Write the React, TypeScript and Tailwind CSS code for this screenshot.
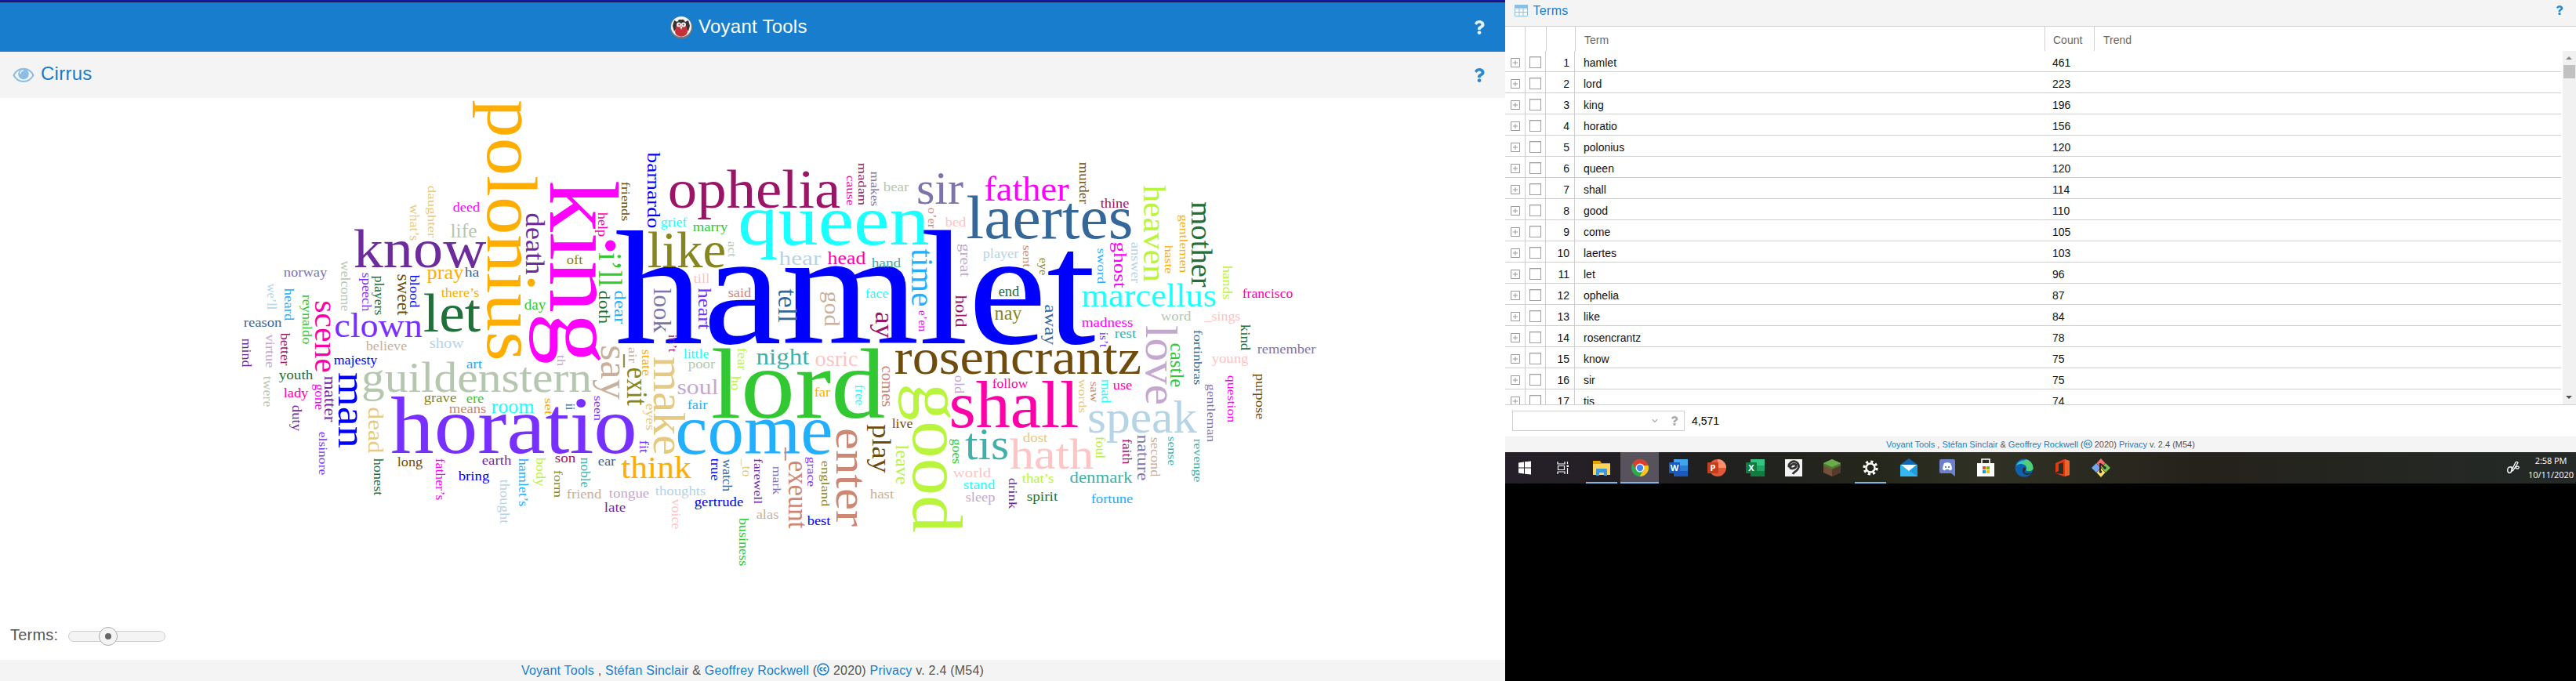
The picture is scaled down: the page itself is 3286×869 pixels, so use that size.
import React from "react";
import { FaQuestion, FaChevronDown } from "react-icons/fa";

const C: Record<string, string> = {
  or: "#ffae00", go: "#e6ca80", ma: "#ff00ff", sa: "#b6c7b0", pu: "#6e2b9e", la: "#7d74ab",
  vi: "#7730ff", dg: "#20703a", br: "#704c0c", bl: "#0000ff", st: "#34679a", lb: "#b5d4e6",
  sk: "#20b0ff", gr: "#32c832", pk: "#ff00a8", li: "#c5a8d0", wi: "#9c1468", ta: "#c8b09c",
  ol: "#86851f", sl: "#cc8874", cy: "#1affff", ro: "#ffc4c4", te: "#40b0a8", ye: "#b8f53c",
};

// word, left, right, baseline, size, colour
type Word = [string, number, number, number, number, string];

const across: Word[] = [
  ["deed", 578, 612, 270, 16, "ma"], ["life", 575, 608, 303, 25, "sa"], ["know", 452, 619, 341, 70, "pu"],
  ["norway", 362, 417, 353, 16, "la"], ["pray", 545, 591, 356, 26, "or"], ["ha", 593, 611, 353, 16, "st"],
  ["there’s", 563, 611, 379, 16, "or"], ["reason", 311, 359, 417, 17, "st"], ["clown", 427, 538, 429.5, 45, "vi"],
  ["let", 541, 612, 423, 70, "dg"], ["believe", 467, 519, 447, 16.5, "ta"], ["show", 548, 591, 444, 18, "lb"],
  ["majesty", 426, 481, 465, 16, "bl"], ["art", 595, 615, 470, 17, "sk"], ["youth", 356, 399, 484, 17, "dg"],
  ["guildenstern", 462, 754, 500, 55, "sa"], ["lady", 362, 393, 507, 17, "pk"], ["grave", 541, 582, 513, 17, "ol"],
  ["ere", 595, 617, 514, 17, "gr"], ["means", 573, 620, 527, 16, "sl"], ["room", 627, 681, 527, 25, "cy"],
  ["horatio", 500, 811, 577.5, 104, "vi"], ["long", 507, 539, 595, 17, "br"], ["bring", 585, 624, 613, 17, "bl"],
  ["earth", 615, 652, 593, 17, "pu"], ["day", 669, 696, 394.5, 18, "gr"], ["grief", 843, 876, 289, 17, "cy"],
  ["marry", 884, 928, 295, 17, "gr"], ["ophelia", 853, 1071, 265, 69, "wi"], ["oft", 723, 743, 337, 17, "ol"],
  ["hamlet", 788, 1394, 438, 208, "bl"], ["like", 827, 925, 341, 65, "ol"], ["queen", 943, 1184, 312, 91, "cy"],
  ["till", 885, 905, 361, 17, "ro"], ["said", 929, 958, 379, 17, "sl"], ["little", 872, 904, 457, 17, "cy"],
  ["poor", 878, 912, 470, 16, "sa"], ["soul", 864, 916, 503, 28, "li"], ["night", 965, 1032, 465, 29, "te"],
  ["lord", 909, 1127, 533, 128, "gr"], ["fair", 877, 902, 522, 17, "sk"], ["come", 863, 1061, 578.5, 90, "sk"],
  ["son", 708, 734, 590, 17, "wi"], ["ear", 763, 785, 594, 17, "st"], ["think", 793, 881, 610, 40, "or"],
  ["friend", 723, 767, 636, 17, "ta"], ["tongue", 777, 828, 635, 17, "li"], ["late", 771, 798, 653, 17, "pu"],
  ["thoughts", 836, 900, 632, 17, "lb"], ["gertrude", 886, 948, 646, 17, "bl"], ["alas", 965, 993, 662, 17, "ta"],
  ["bear", 1127, 1159, 244, 16, "sa"], ["sir", 1170, 1228, 260, 60, "la"], ["father", 1256, 1363, 256, 44, "ma"],
  ["laertes", 1234, 1444, 304, 78, "st"], ["bed", 1206, 1232, 289, 17, "ro"], ["hear", 994, 1047, 338, 26, "lb"],
  ["head", 1056, 1104, 337, 23, "pk"], ["hand", 1112, 1149, 341, 17, "te"], ["face", 1104, 1133, 380, 17, "cy"],
  ["player", 1254, 1299, 329, 17, "lb"], ["end", 1274, 1300, 378, 18, "dg"], ["nay", 1269, 1303, 408, 25, "ol"],
  ["osric", 1040, 1094, 467, 27, "ro"], ["rosencrantz", 1142, 1455, 477, 64, "br"], ["follow", 1266, 1311, 495, 17, "pk"],
  ["far", 1039, 1059, 506, 17, "or"], ["shall", 1212, 1375, 545, 84, "pk"], ["live", 1138, 1164, 546, 17, "br"],
  ["tis", 1232, 1286, 586, 58, "te"], ["hath", 1289, 1394, 598, 55, "ro"], ["dost", 1305, 1336, 564, 17, "go"],
  ["world", 1216, 1264, 609, 17, "ro"], ["stand", 1229, 1269, 624, 17, "cy"], ["sleep", 1232, 1269, 640, 17, "li"],
  ["that’s", 1304, 1344, 616, 17, "ye"], ["spirit", 1310, 1349, 639, 17, "dg"], ["best", 1030, 1059, 670, 17, "bl"],
  ["hast", 1110, 1140, 636, 17, "ta"], ["thine", 1404, 1440, 265, 17, "wi"], ["francisco", 1585, 1649, 380, 17, "pk"],
  ["marcellus", 1380, 1551, 391, 42, "cy"], ["word", 1481, 1519, 409, 17, "sa"], ["_sings", 1537, 1582, 409, 17, "ro"],
  ["madness", 1380, 1445, 417, 17, "ma"], ["rest", 1422, 1449, 431, 17, "te"], ["young", 1546, 1592, 463, 17, "ro"],
  ["remember", 1604, 1678, 451, 17, "la"], ["use", 1420, 1444, 497, 17, "pk"], ["speak", 1388, 1526, 551.5, 59, "lb"],
  ["denmark", 1365, 1444, 616, 21, "te"], ["fortune", 1392, 1445, 642, 17, "sk"],
];

// word, top, bottom, baseline x, size, colour
const down: Word[] = [
  ["polonius", 129, 459, 622, 92, "or"], ["daughter", 237, 303, 546, 15.5, "go"], ["what’s", 261, 307, 523, 16, "go"],
  ["welcome", 333, 397, 434.5, 16, "sa"], ["speech", 348, 397, 462, 16, "vi"], ["players", 352, 402, 477.5, 16, "dg"],
  ["sweet", 350, 402, 507, 23, "br"], ["blood", 351, 392, 523, 16, "bl"], ["we’ll", 362, 395, 341, 16, "lb"],
  ["heard", 368, 409, 363, 16, "sk"], ["reynaldo", 376, 439, 386, 16, "gr"], ["scene", 384, 475, 402, 39, "pk"],
  ["mind", 432, 468, 308.7, 16, "pu"], ["virtue", 427, 469, 338.5, 16, "li"], ["better", 425, 466, 357.5, 16, "wi"],
  ["matter", 480, 538, 414, 20, "pu"], ["gone", 490, 523, 401.5, 16, "ma"], ["man", 476, 571, 432, 50, "bl"],
  ["twere", 480, 519, 335.5, 16, "sa"], ["duty", 517, 550, 372.5, 16, "pu"], ["dead", 520, 578, 470, 27, "go"],
  ["elsinore", 551, 606, 406.5, 15.5, "vi"], ["honest", 585, 632, 477, 16, "dg"], ["father’s", 585, 638, 556, 16, "ma"],
  ["thought", 612, 668, 638, 16, "lb"], ["death", 272, 350, 670.5, 33, "pu"], ["king", 232, 463, 702, 125, "ma"],
  ["i’ll", 323, 365, 764, 43, "gr"], ["help", 271, 302, 762.5, 16, "pk"], ["friends", 232, 282, 793, 15.5, "br"],
  ["barnardo", 195, 291, 826, 24, "bl"], ["act", 308, 328, 929, 15.5, "sa"], ["heart", 368, 420, 891, 24, "vi"],
  ["look", 368, 424, 834, 31, "la"], ["doth", 371, 413, 763.5, 21, "dg"], ["dear", 371, 413, 783.5, 22, "sk"],
  ["tell", 369, 411, 993, 33, "st"], ["th", 453, 467, 710.5, 15.5, "li"], ["say", 441, 509, 767, 51, "ta"],
  ["in’t", 427, 449, 852.5, 15.5, "wi"], ["air", 443, 463, 801.5, 15.5, "ta"], ["_exit", 453, 517, 800, 37, "ol"],
  ["state", 446, 479, 819, 16, "or"], ["make", 456, 580, 834, 57, "go"], ["fear", 444, 472, 941, 16, "ye"],
  ["ho", 480, 498, 933, 16, "ye"], ["set", 508, 529, 694.5, 15.5, "or"], ["ii", 515, 523, 722, 16, "st"],
  ["seen", 505, 537, 758, 15.5, "vi"], ["eyes", 515, 549, 823.5, 16, "go"], ["fit", 562, 578, 816, 16, "vi"],
  ["hamlet’s", 585, 646, 662, 16, "sk"], ["body", 584, 620, 684, 16, "ye"], ["form", 600, 635, 707, 15.5, "ol"],
  ["noble", 584, 622, 741, 16, "te"], ["voice", 637, 675, 857, 16, "ro"], ["true", 585, 613, 907, 16, "bl"],
  ["watch", 586, 627, 922, 16, "st"], ["_to", 586, 608, 946.5, 16, "go"], ["farewell", 585, 643, 962, 15.5, "pu"],
  ["mark", 595, 631, 986, 15.5, "la"], ["business", 661, 722, 943, 16, "gr"], ["cause", 224, 262, 1080, 15.5, "pk"],
  ["madam", 208, 262, 1094.5, 15.5, "wi"], ["makes", 219, 263, 1110.5, 15.5, "la"], ["o’er", 265, 291, 1184, 15.5, "sl"],
  ["time", 318, 391, 1163, 39, "sk"], ["great", 311, 353, 1225, 19, "li"], ["god", 372, 416, 1052, 27, "ta"],
  ["ay", 398, 431, 1117, 33, "wi"], ["e’en", 396, 423, 1172, 15.5, "ma"], ["hold", 377, 417, 1219, 21, "wi"],
  ["sent", 313, 341, 1305, 15.5, "sl"], ["eye", 329, 351, 1326, 15.5, "ol"], ["away", 389, 440, 1332.5, 22, "st"],
  ["comes", 467, 519, 1125, 20, "sl"], ["old", 479, 502, 1218, 16, "li"], ["free", 491, 517, 1091, 16, "cy"],
  ["good", 491, 678, 1165, 91, "ye"], ["play", 542, 603, 1113, 33, "br"], ["enter", 547, 671, 1067, 58, "sl"],
  ["leave", 568, 618, 1143, 24, "ye"], ["goes", 560, 592, 1215, 16, "gr"], ["drink", 610, 649, 1287, 15.5, "pu"],
  ["_exeunt", 572, 674, 1005.5, 35, "sl"], ["grace", 583, 621, 1029.5, 15.5, "vi"], ["england", 588, 646, 1048, 15.5, "ol"],
  ["murder", 207, 260, 1377, 16, "br"], ["heaven", 237, 359, 1459, 41, "ye"], ["gentlemen", 274, 348, 1505, 15.5, "or"],
  ["mother", 258, 366, 1520, 37, "dg"], ["haste", 313, 349, 1486, 15.5, "or"], ["answer", 309, 361, 1443, 16, "lb"],
  ["ghost", 309, 367, 1421, 24, "ma"], ["sword", 317, 362, 1399.5, 15.5, "sk"], ["hands", 339, 382, 1560, 16, "ye"],
  ["is’t", 424, 443, 1402.5, 15.5, "vi"], ["love", 416, 516, 1462, 57, "li"], ["castle", 438, 494, 1493, 25, "gr"],
  ["fortinbras", 421, 491, 1522.5, 15.5, "st"], ["kind", 414, 447, 1583, 16, "dg"], ["question", 479, 539, 1566, 15.5, "ma"],
  ["purpose", 477, 535, 1602, 16, "br"], ["gentleman", 490, 564, 1539.5, 15.5, "la"], ["words", 484, 527, 1375.5, 15.5, "go"],
  ["saw", 487, 513, 1390.5, 15.5, "sl"], ["mad", 484, 514, 1405, 16, "cy"], ["foul", 557, 585, 1398, 16, "ye"],
  ["faith", 560, 592, 1432, 16, "wi"], ["nature", 555, 613, 1450.5, 20, "la"], ["second", 558, 608, 1467.5, 16, "ta"],
  ["sense", 557, 594, 1489.5, 15.5, "te"], ["revenge", 560, 615, 1522.5, 15.5, "te"],
];

const TOP = 125;
// Side bearing of the face, as a share of the font size.
const BEAR = 0.018;

function Cloud() {
  return (
    <svg width={1920} height={660} viewBox="0 0 1920 660" className="block font-['Liberation_Serif',serif]">
      {across.map(([w, a, b, y, s, c]) => (
        <text key={w} x={a - s * BEAR} y={y - TOP} fontSize={s} fill={C[c]} textLength={b - a + 2 * s * BEAR} lengthAdjust="spacingAndGlyphs">{w}</text>
      ))}
      {down.map(([w, a, b, x, s, c]) => (
        <text key={w} transform={`translate(${x} ${a - TOP - s * BEAR}) rotate(90)`} fontSize={s} fill={C[c]} textLength={b - a + 2 * s * BEAR} lengthAdjust="spacingAndGlyphs">{w}</text>
      ))}
    </svg>
  );
}

function Credits({ className }: { className: string }) {
  return (
    <div className={`flex items-center justify-center whitespace-pre bg-[#f4f4f4] text-[#555] ${className}`}>
      <span>
        <span className="text-[#157fcc]">Voyant Tools</span> , <span className="text-[#157fcc]">Stéfan Sinclair</span> &amp; <span className="text-[#157fcc]">Geoffrey Rockwell</span> (
        <svg viewBox="0 0 16 16" className="inline-block size-[1em] align-[-0.1em]">
          <circle cx="8" cy="8" r="7" fill="none" stroke="#157fcc" strokeWidth="1.6" />
          <path d="M7.300 6.300a2 2 0 1 0 0 3.400M12 6.300a2 2 0 1 0 0 3.400" fill="none" stroke="#157fcc" strokeWidth="1.500" />
        </svg>
        {" "}2020) <span className="text-[#157fcc]">Privacy</span> v. 2.4 (M54)
      </span>
    </div>
  );
}

function Logo() {
  return (
    <svg width="30" height="30" viewBox="0 0 30 30">
      <circle cx="15" cy="15" r="14.3" fill="#777" />
      <circle cx="15" cy="14" r="13" fill="#f4f4f4" />
      <path d="M6 6 10 8 12 5H18L20 8 24 6 26 13 24 20 19 14H11L6 20 4 13Z" fill="#333" />
      <path d="M8 14C10 10 20 10 22 14L23 21C21 28.500 9 28.500 7 21Z" fill="#c4303a" />
      <circle cx="12" cy="11.5" r="3" fill="#eee" /><circle cx="18" cy="11.5" r="3" fill="#eee" />
      <circle cx="12.3" cy="11.5" r="1" fill="#a22" /><circle cx="17.7" cy="11.5" r="1" fill="#a22" />
      <path d="M13.5 14h3L15 18Z" fill="#fff" />
    </svg>
  );
}

const rows: [string, number][] = [
  ["hamlet", 461], ["lord", 223], ["king", 196], ["horatio", 156], ["polonius", 120], ["queen", 120],
  ["shall", 114], ["good", 110], ["come", 105], ["laertes", 103], ["let", 96], ["ophelia", 87],
  ["like", 84], ["rosencrantz", 78], ["know", 75], ["sir", 75], ["tis", 74],
];

function TermsTable() {
  return (
    <div className="text-[14px] leading-none">
      <div className="flex h-8 border-t border-[#cfcfcf] text-[#666]">
        <div className="w-[26px] border-r border-[#cfcfcf]" />
        <div className="w-[27px] border-r border-[#cfcfcf]" />
        <div className="w-[37px] border-r border-[#cfcfcf]" />
        <div className="flex w-[599px] items-center border-r border-[#cfcfcf] pl-[11px] pt-0.5">Term</div>
        <div className="flex w-[63px] items-center border-r border-[#cfcfcf] pl-[10px] pt-0.5">Count</div>
        <div className="flex items-center pl-[11px] pt-0.5">Trend</div>
      </div>
      <div className="flex h-[452px] overflow-hidden border-b border-[#cfcfcf]">
        <div className="w-[1347px] text-[#111]">
          {rows.map(([term, count], i) => (
            <div key={term} className="flex h-[27px] items-stretch border-b border-[#cfcfcf]">
              <div className="flex w-[26px] items-center border-r border-[#cfcfcf] pl-[7px] pt-[3px]">
                <svg width="12" height="12"><path d="M.5.5h11v11H.5ZM3 6h6M6 3v6" fill="none" stroke="#999" /></svg>
              </div>
              <div className="flex w-[26px] items-center border-r border-[#cfcfcf] pl-[5px] pt-0.5">
                <div className="size-[15px] border border-[#a0a0a0] bg-white shadow-[inset_0_1px_1px_#ddd]" />
              </div>
              <div className="flex w-[37px] items-center justify-end border-r border-[#cfcfcf] pr-1.5 pt-1">{i + 1}</div>
              <div className="flex w-[598px] items-center pl-[11px] pt-1">{term}</div>
              <div className="flex items-center pl-[11px] pt-1">{count}</div>
            </div>
          ))}
        </div>
        <div className="ml-auto flex w-[17px] flex-col items-center bg-[#f1f1f1] py-1.5">
          <svg width="9" height="6"><path d="M0 5h8L4 1Z" fill="#888" /></svg>
          <div className="mt-[6px] h-[17px] w-[15px] bg-[#c1c1c1]" />
          <svg className="mt-auto" width="9" height="6"><path d="M0 1h8L4 5Z" fill="#505050" /></svg>
        </div>
      </div>
    </div>
  );
}

function OfficeTile({ letter, back, mid, front, round }: { letter: string; back: string; mid: string; front: string; round?: boolean }) {
  return (
    <svg width="24" height="24" viewBox="0 0 24 24">
      {round ? (
        <>
          <circle cx="13" cy="12" r="11" fill={mid} />
          <path d="M13 1a11 11 0 0 1 11 11H13Z" fill={back} />
        </>
      ) : (
        <>
          <rect x="6" y="1" width="18" height="22" rx="1" fill={mid} />
          <rect x="6" y="1" width="18" height="8" fill={back} />
          <rect x="6" y="16" width="18" height="7" fill={front} />
        </>
      )}
      <rect x="0" y="5" width="14" height="14" rx="1" fill={front} />
      <text x="7" y="16" textAnchor="middle" fontSize="11" fontWeight="700" fill="#fff" className="font-['Open_Sans',sans-serif]">{letter}</text>
    </svg>
  );
}

const I = ({ children }: { children: React.ReactNode }) => <svg width="26" height="26" viewBox="0 0 26 26">{children}</svg>;

const apps: { name: string; open?: boolean; active?: boolean; icon: React.ReactNode }[] = [
  { name: "start", icon: <I><path d="M5 6.500 12 5.500V12.500H5ZM13 5.300 21 4.500V12.500H13ZM5 13.500H12V20.500L5 19.500ZM13 13.500H21V21.500L13 20.700Z" fill="#fff" /></I> },
  { name: "tasks", icon: <I><path d="M6 5v3h9V5M6 21v-3h9v3M6.500 10.500h8v5h-8ZM18.500 5v3M18.500 13v8" fill="none" stroke="#fff" strokeWidth="1.200" /><path d="M17.500 9.500h2.500v2.500h-2.500Z" fill="#fff" /></I> },
  { name: "files", open: true, icon: <I><path d="M2 4h9l2 3h11v15H2Z" fill="#e3a300" /><path d="M2 8h22v14H2Z" fill="#ffd45a" /><path d="M6 23v-8q0-1 1-1h12q1 0 1 1v8h-4v-4h-6v4Z" fill="#3f97dd" /></I> },
  { name: "chrome", open: true, active: true, icon: <I><circle cx="13" cy="13" r="11" fill="#2da94f" /><path d="M3.500 7.500A11 11 0 0 1 23.500 10H13L8 14.500Z" fill="#e23a2e" /><path d="M23.500 10A11 11 0 0 1 12.500 24L18 15 16 10Z" fill="#fcc31e" /><circle cx="13" cy="13" r="5.500" fill="#fff" /><circle cx="13" cy="13" r="4.200" fill="#4285f4" /></I> },
  { name: "word", icon: <OfficeTile letter="W" back="#41a5ee" mid="#2b7cd3" front="#185abd" /> },
  { name: "slides", icon: <OfficeTile letter="P" back="#ff8f6b" mid="#e0593b" front="#c43e1c" round /> },
  { name: "sheets", icon: <OfficeTile letter="X" back="#33c481" mid="#21a366" front="#107c41" /> },
  { name: "paint", icon: <I><rect x="2" y="2" width="22" height="22" fill="#f2f2f2" /><path d="M7 12c-1-5 4-8 8-7s6 6 3 10c-2 3-5 3-6 6M8 13c4 2 9 0 8-4-3-2-7 0-8 4" fill="none" stroke="#333" strokeWidth="2.800" /></I> },
  { name: "blocks", icon: <I><path d="M13 2 24 7v12l-11 5L2 19V7Z" fill="#75513a" /><path d="M13 12 24 7v12l-11 5Z" fill="#553a2a" /><path d="M13 2 24 7v3l-11 5L2 10V7Z" fill="#4b7a35" /><path d="M13 2 24 7 13 12 2 7Z" fill="#6caa4c" /></I> },
  { name: "settings", open: true, icon: <I><circle cx="13" cy="13" r="5.500" fill="none" stroke="#fff" strokeWidth="2.400" /><circle cx="13" cy="13" r="8" fill="none" stroke="#fff" strokeWidth="3.200" strokeDasharray="3.140 3.140" /></I> },
  { name: "mail", icon: <I><path d="M2 9 13 1 24 9v15H2Z" fill="#1067b5" /><path d="M2 9h22v15H2Z" fill="#1b9de2" /><path d="M2 9l22 15H2Z" fill="#35b8f1" /><path d="M3 9h20L13 17Z" fill="#fff" /></I> },
  { name: "chat", icon: <I><path d="M5 2h16q2 0 2 2v20l-5-4H5q-2 0-2-2V4q0-2 2-2Z" fill="#6d80cb" /><path d="M9 7q4-1.500 8 0 2 4 2 8l-3 1.500-1-1.500h-4l-1 1.500L7 15q0-4 2-8Z" fill="#fff" /><circle cx="11" cy="12" r="1.200" fill="#6d80cb" /><circle cx="15" cy="12" r="1.200" fill="#6d80cb" /></I> },
  { name: "store", icon: <I><path d="M8 8V2h10v6" fill="none" stroke="#fff" strokeWidth="1.600" /><path d="M2 7h22v17H2Z" fill="#fff" /><path d="M9 11h4v4H9Z" fill="#f25022" /><path d="M14 11h4v4h-4Z" fill="#7fba00" /><path d="M9 16h4v4H9Z" fill="#00a4ef" /><path d="M14 16h4v4h-4Z" fill="#ffb900" /></I> },
  { name: "edge", icon: <I><circle cx="13" cy="13" r="11.500" fill="#0f62b0" /><path d="M2 12A11.500 11.500 0 0 1 24.500 13c0 4-6 5-9 3 2-4-1-8-6-8-4 0-7 2-7.500 4Z" fill="#35c1c8" /><path d="M15 2a11.500 11.500 0 0 1 9.500 11c0 4-6 5-9 3 3-5-2-8-5-8Z" fill="#51cf74" /><path d="M15 16c-3 1-2 6 8 3-2 2-4 3-6 3-6 0-8-6-4-10 2 1 3 3 2 4Z" fill="#24303a" /></I> },
  { name: "office", icon: <I><path d="M4 7 15 2l7 2v18l-7 2L4 20l10 1V6L8 8v9l-4 2Z" fill="#e03a12" /><path d="m16 2 6 2v18l-6 2Z" fill="#f1622b" /></I> },
  { name: "git", icon: <I><path d="M13 1 18.500 7 13 13 7.500 7Z" fill="#f0716c" /><path d="M7 7 12.500 13 7 19 1 13Z" fill="#70a7ef" /><path d="M19 7 25 13 19 19 13.500 13Z" fill="#7bbf50" /><path d="M13 13.500 18.500 19 13 25 7.500 19Z" fill="#ffdf70" /><path d="M12 7v11M13 8l5 5" stroke="#222" strokeWidth="1.800" /><circle cx="12.500" cy="18" r="1.800" fill="#222" /><circle cx="18" cy="13" r="1.800" fill="#222" /></I> },
];

function Taskbar() {
  return (
    <div className="flex h-10 bg-[linear-gradient(90deg,#251f29_0%,#20201f_20%,#25271c_35%,#303124_45%,#25221b_65%,#242a28_100%)]">
      {apps.map((a) => (
        <div key={a.name} className={`flex w-[49.05px] flex-col items-center ${a.active ? "bg-[#57525c]" : ""}`}>
          <div className="flex h-[38px] items-center pt-0.5">{a.icon}</div>
          {a.open && <div className={`h-0.5 bg-[#76b9ed] ${a.active ? "w-full" : "w-10"}`} />}
        </div>
      ))}
      <div className="ml-auto flex items-center gap-[11px] pr-[3px] text-white">
        <svg width="16" height="18" viewBox="0 0 16 18"><path d="M6 8H3C0 9 0 15 3 15.500 6 15 6 13 6 10ZM6 12 11 2q2-1.500 3 .500L8 12l-3 2ZM10 9c3-3 6-2 5 0s-3 1-4 0" fill="none" stroke="#fff" strokeWidth="1.300" /></svg>
        <div className="flex h-10 flex-col items-center whitespace-nowrap pt-0.5 font-['Open_Sans',sans-serif] text-[11px] tracking-[-0.05px]">
          <span className="h-[18px] leading-[18px]">2:58 PM</span>
          <span className="h-[18px] leading-[18px]">10/11/2020</span>
        </div>
      </div>
    </div>
  );
}

export default function App() {
  return (
    <div className="flex h-[869px] w-[3286px] overflow-hidden bg-black font-['Liberation_Sans',Arial,sans-serif]">
      <div className="flex w-[1920px] flex-col bg-white">
        <div className="h-[3px] border-b border-[#0b1060] bg-[#121c9c]" />
        <div className="flex h-[63px] items-center bg-[#177dcc] text-white">
          <div className="flex flex-1 items-center gap-[7px] pl-[854px] text-[24px] leading-none tracking-[0.25px]">
            <Logo />
            <span className="pb-0.5">Voyant Tools</span>
          </div>
          <FaQuestion className="mr-[24px] size-[18px] opacity-90" />
        </div>
        <div className="flex h-[59px] items-center bg-[#f4f4f4] text-[#177dcc]">
          <svg className="ml-[16px]" width="28" height="20" viewBox="0 0 28 20">
            <path d="M1.500 10C7-1 21-1 26.500 10 21 20.500 7 20.500 1.500 10Z" fill="none" stroke="#8bbee5" strokeWidth="2" />
            <circle cx="14" cy="8.500" r="6.800" fill="#8bbee5" />
            <path d="M10 8q0-4 4-4" fill="none" stroke="#f4f4f4" strokeWidth="1.500" />
          </svg>
          <span className="flex-1 pl-[8px] pb-1 text-[24px] leading-none tracking-[0.25px]">Cirrus</span>
          <FaQuestion className="mr-[24px] size-[18px] opacity-90" />
        </div>
        <Cloud />
        <div className="flex h-[57px] items-center pb-[3px] pl-[13px] text-[20px] tracking-[0.2px] text-[#555]">
          <span className="w-[74px] pb-1">Terms:</span>
          <div className="flex h-[14px] w-[124px] items-center rounded-full border border-[#cfcfcf] bg-[#f4f4f4] pl-[38px]">
            <div className="flex size-6 shrink-0 items-center justify-center rounded-full border border-[#aaa] bg-[#f4f4f4]">
              <div className="size-2 rounded-full bg-[#666]" />
            </div>
          </div>
        </div>
        <Credits className="h-[27px] text-[16px] tracking-[0.22px]" />
      </div>
      <div className="flex w-[1366px] flex-col bg-black">
        <div className="flex h-[33px] items-center bg-[#f4f4f4] pb-[7px] pl-[12px] text-[#177dcc]">
          <svg width="17" height="15" viewBox="0 0 17 15"><path d="M.5.5h16v14H.5ZM.5 5h16M.5 9.500h16M6 3v11.500M11 3v11.500" fill="#fff" stroke="#8bbee5" /><path d="M0 0h17v4H0Z" fill="#8bbee5" /></svg>
          <span className="flex-1 pl-[6.500px] pt-px text-[16px] leading-none tracking-[0.3px]">Terms</span>
          <FaQuestion className="mr-[15px] size-[12px] opacity-90" />
        </div>
        <div className="h-[524px] bg-white">
          <TermsTable />
          <div className="flex items-center gap-[9px] pl-[9px] pt-[7px]">
            <div className="flex h-[26px] w-[220px] items-center justify-end gap-[15px] border border-[#cfcfcf] pr-[6px] text-[#aaa]">
              <FaChevronDown className="size-[8px]" />
              <FaQuestion className="size-[12px]" />
            </div>
            <span className="text-[14px] leading-none">4,571</span>
          </div>
        </div>
        <Credits className="h-5 text-[11px]" />
        <Taskbar />
      </div>
    </div>
  );
}
